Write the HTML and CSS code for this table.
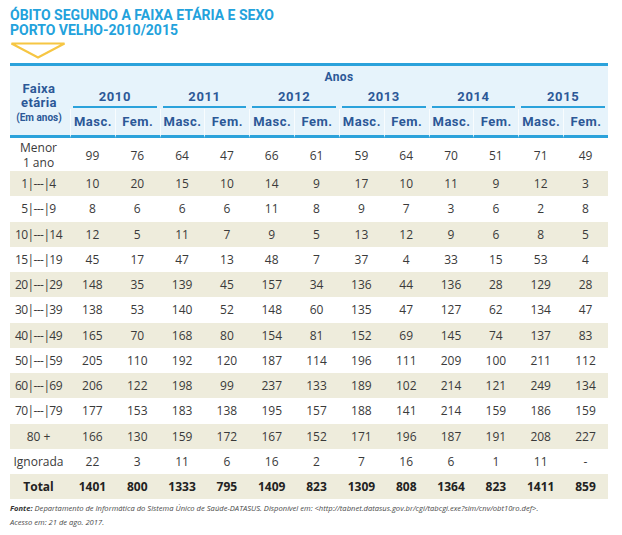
FILE: index.html
```html
<!DOCTYPE html>
<html lang="pt-BR">
<head>
<meta charset="utf-8">
<title>Óbito segundo a faixa etária e sexo</title>
<link rel="stylesheet" href="styles.css">
</head>
<body>
<div class="page">
  <h1 class="title">ÓBITO SEGUNDO A FAIXA ETÁRIA E SEXO<br>PORTO VELHO-2010/2015</h1>
  <svg class="marker" width="56" height="17" viewBox="0 0 56 17" aria-hidden="true">
    <path d="M1.5 1.5 H54.5 L28 15.5 Z" fill="none" stroke="#f6c643" stroke-width="2.2" stroke-linejoin="miter"/>
  </svg>
  <table class="data">
    <colgroup><col class="c-faixa"><col span="12"></colgroup>
    <thead>
      <tr class="r-anos">
        <th rowspan="3" class="faixa"><span class="faixa-main">Faixa<br>etária</span><span class="faixa-sub">(Em anos)</span></th>
        <th colspan="12" class="anos">Anos</th>
      </tr>
      <tr class="r-years">
        <th colspan="2"><span>2010</span></th>
        <th colspan="2"><span>2011</span></th>
        <th colspan="2"><span>2012</span></th>
        <th colspan="2"><span>2013</span></th>
        <th colspan="2"><span>2014</span></th>
        <th colspan="2"><span>2015</span></th>
      </tr>
      <tr class="r-sex">
        <th>Masc.</th><th>Fem.</th><th>Masc.</th><th>Fem.</th><th>Masc.</th><th>Fem.</th>
        <th>Masc.</th><th>Fem.</th><th>Masc.</th><th>Fem.</th><th>Masc.</th><th>Fem.</th>
      </tr>
    </thead>
    <tbody>
      <tr class="tall"><td class="lbl"><span class="ln">Menor</span><span class="ln">1 ano</span></td><td>99</td><td>76</td><td>64</td><td>47</td><td>66</td><td>61</td><td>59</td><td>64</td><td>70</td><td>51</td><td>71</td><td>49</td></tr>
      <tr><td class="lbl rng">1|---|4</td><td>10</td><td>20</td><td>15</td><td>10</td><td>14</td><td>9</td><td>17</td><td>10</td><td>11</td><td>9</td><td>12</td><td>3</td></tr>
      <tr><td class="lbl rng">5|---|9</td><td>8</td><td>6</td><td>6</td><td>6</td><td>11</td><td>8</td><td>9</td><td>7</td><td>3</td><td>6</td><td>2</td><td>8</td></tr>
      <tr><td class="lbl rng">10|---|14</td><td>12</td><td>5</td><td>11</td><td>7</td><td>9</td><td>5</td><td>13</td><td>12</td><td>9</td><td>6</td><td>8</td><td>5</td></tr>
      <tr><td class="lbl rng">15|---|19</td><td>45</td><td>17</td><td>47</td><td>13</td><td>48</td><td>7</td><td>37</td><td>4</td><td>33</td><td>15</td><td>53</td><td>4</td></tr>
      <tr><td class="lbl rng">20|---|29</td><td>148</td><td>35</td><td>139</td><td>45</td><td>157</td><td>34</td><td>136</td><td>44</td><td>136</td><td>28</td><td>129</td><td>28</td></tr>
      <tr><td class="lbl rng">30|---|39</td><td>138</td><td>53</td><td>140</td><td>52</td><td>148</td><td>60</td><td>135</td><td>47</td><td>127</td><td>62</td><td>134</td><td>47</td></tr>
      <tr><td class="lbl rng">40|---|49</td><td>165</td><td>70</td><td>168</td><td>80</td><td>154</td><td>81</td><td>152</td><td>69</td><td>145</td><td>74</td><td>137</td><td>83</td></tr>
      <tr><td class="lbl rng">50|---|59</td><td>205</td><td>110</td><td>192</td><td>120</td><td>187</td><td>114</td><td>196</td><td>111</td><td>209</td><td>100</td><td>211</td><td>112</td></tr>
      <tr><td class="lbl rng">60|---|69</td><td>206</td><td>122</td><td>198</td><td>99</td><td>237</td><td>133</td><td>189</td><td>102</td><td>214</td><td>121</td><td>249</td><td>134</td></tr>
      <tr><td class="lbl rng">70|---|79</td><td>177</td><td>153</td><td>183</td><td>138</td><td>195</td><td>157</td><td>188</td><td>141</td><td>214</td><td>159</td><td>186</td><td>159</td></tr>
      <tr><td class="lbl">80 +</td><td>166</td><td>130</td><td>159</td><td>172</td><td>167</td><td>152</td><td>171</td><td>196</td><td>187</td><td>191</td><td>208</td><td>227</td></tr>
      <tr><td class="lbl">Ignorada</td><td>22</td><td>3</td><td>11</td><td>6</td><td>16</td><td>2</td><td>7</td><td>16</td><td>6</td><td>1</td><td>11</td><td>-</td></tr>
      <tr class="total"><td class="lbl">Total</td><td>1401</td><td>800</td><td>1333</td><td>795</td><td>1409</td><td>823</td><td>1309</td><td>808</td><td>1364</td><td>823</td><td>1411</td><td>859</td></tr>
    </tbody>
  </table>
  <p class="source"><b>Fonte:</b> Departamento de Informática do Sistema Único de Saúde-DATASUS. Disponível em: &lt;http://tabnet.datasus.gov.br/cgi/tabcgi.exe?sim/cnv/obt10ro.def&gt;.<br>Acesso em: 21 de ago. 2017.</p>
</div>
</body>
</html>
```
FILE: styles.css
```css
* { box-sizing: border-box; }

html, body {
  margin: 0;
  padding: 0;
  background: #ffffff;
}

.page {
  width: 622px;
  padding: 8px 14px 0 10px;
}

.title {
  margin: 0;
  font-family: Roboto, "Liberation Sans", sans-serif;
  font-weight: 700;
  font-size: 14px;
  line-height: 15px;
  color: #23a2dc;
}

.marker {
  display: block;
  margin-top: 4px;
}

.data {
  margin-top: 4px;
  width: 598px;
  table-layout: fixed;
  border-collapse: separate;
  border-spacing: 0;
}

.c-faixa { width: 60px; }

.data thead th {
  background: #e6f3fb;
  color: #2c5897;
  font-family: Roboto, "Liberation Sans", sans-serif;
  font-weight: 700;
  padding: 0;
  text-align: center;
}

.data .r-anos th {
  border-top: 3px solid #2ba2db;
}

.data .r-anos th.anos {
  font-size: 12px;
  line-height: 14px;
  letter-spacing: 0.4px;
  padding: 4px 0 2px;
  vertical-align: top;
}

.data .r-anos th.faixa {
  vertical-align: middle;
  border-bottom: 3px solid #2ba2db;
  padding: 5px 2px 0 0;
}

.faixa-main {
  display: block;
  font-size: 13px;
  line-height: 14px;
  letter-spacing: 0.4px;
}

.faixa-sub {
  display: block;
  margin-top: 2px;
  font-size: 10px;
  line-height: 12px;
}

.data .r-years th {
  padding: 4px 0 1px;
  font-size: 13px;
  line-height: 14px;
  letter-spacing: 0.6px;
}

.data .r-years th span {
  display: block;
  margin: 0 3px;
  padding-bottom: 2px;
  border-bottom: 2px solid #2ba2db;
}

.data .r-sex th {
  padding: 6px 0;
  font-size: 13px;
  line-height: 14px;
  letter-spacing: 0.5px;
  border-bottom: 3px solid #2ba2db;
  border-left: 1px solid rgba(255, 255, 255, 0.7);
}

.data tbody td {
  font-family: "Open Sans", "Liberation Sans", sans-serif;
  font-size: 12px;
  line-height: 15px;
  color: #3a3a3a;
  text-align: center;
  vertical-align: middle;
  height: 25.25px;
  padding: 0;
}

.data tbody tr:nth-child(even) td {
  background: #eeecdc;
}

.data tbody tr.tall td {
  height: 33px;
  padding-top: 1px;
}

.data tbody td.lbl {
  padding-right: 3px;
}

.data tbody td.rng {
  letter-spacing: -0.6px;
}

.ln {
  display: block;
  line-height: 15.5px;
}

.data tbody tr.total td {
  font-weight: 700;
  color: #222222;
}

.source {
  margin: 2px 0 0;
  font-family: "Open Sans", "Liberation Sans", sans-serif;
  font-style: italic;
  font-size: 7.6px;
  line-height: 14px;
  color: #4a4a4a;
}

.source b {
  font-weight: 700;
  color: #333333;
}
```
